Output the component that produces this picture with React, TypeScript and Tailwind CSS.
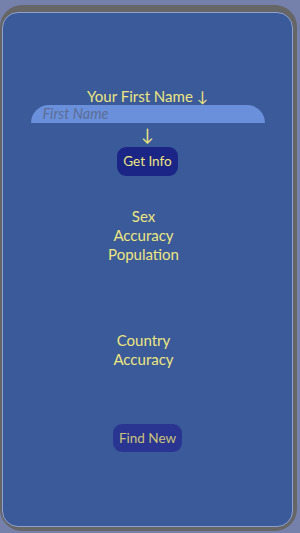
export default function App() {
  return (
    <div className="h-[533px] w-[300px] bg-[#7681ab] pt-[5px] pr-[3px] pb-[2px]" style={{ fontFamily: 'Lato, "Open Sans", sans-serif' }}>
      <div className="h-full rounded-[22px] bg-[#666666] pt-[7px] pl-[2px] pr-[4px] pb-[4px]">
        <div className="flex h-full flex-col items-center rounded-[16px] border border-[#8fa0cf] bg-[#3a5a99] text-[#eee682]">
          <div className="mt-[74px] text-[15px] leading-[19px]">Your First Name ↓</div>
          <input
            placeholder="First Name"
            className="mt-[-1px] h-[18px] w-[234px] rounded-t-[18px] bg-[#6a90dc] px-[12px] text-[14.5px] italic text-[#44577f] outline-none placeholder:text-[#5c6e95]"
          />
          <div className="mt-[2px] text-[17px] leading-[20px]">↓</div>
          <button className="mt-[2px] h-[29px] rounded-[9px] bg-[#1b2585] px-[6px] text-[13.5px] text-[#eee682]">
            Get Info
          </button>
          <div className="mt-[31px] pr-[8px] text-center text-[15px] leading-[19px]">
            <div>Sex</div>
            <div>Accuracy</div>
            <div>Population</div>
          </div>
          <div className="mt-[67px] pr-[8px] text-center text-[15px] leading-[19px]">
            <div>Country</div>
            <div>Accuracy</div>
          </div>
          <button className="mt-[55px] h-[28px] rounded-[9px] bg-[#2a3592] px-[6px] text-[13.5px] text-[#c9c27a]">
            Find New
          </button>
        </div>
      </div>
    </div>
  )
}
